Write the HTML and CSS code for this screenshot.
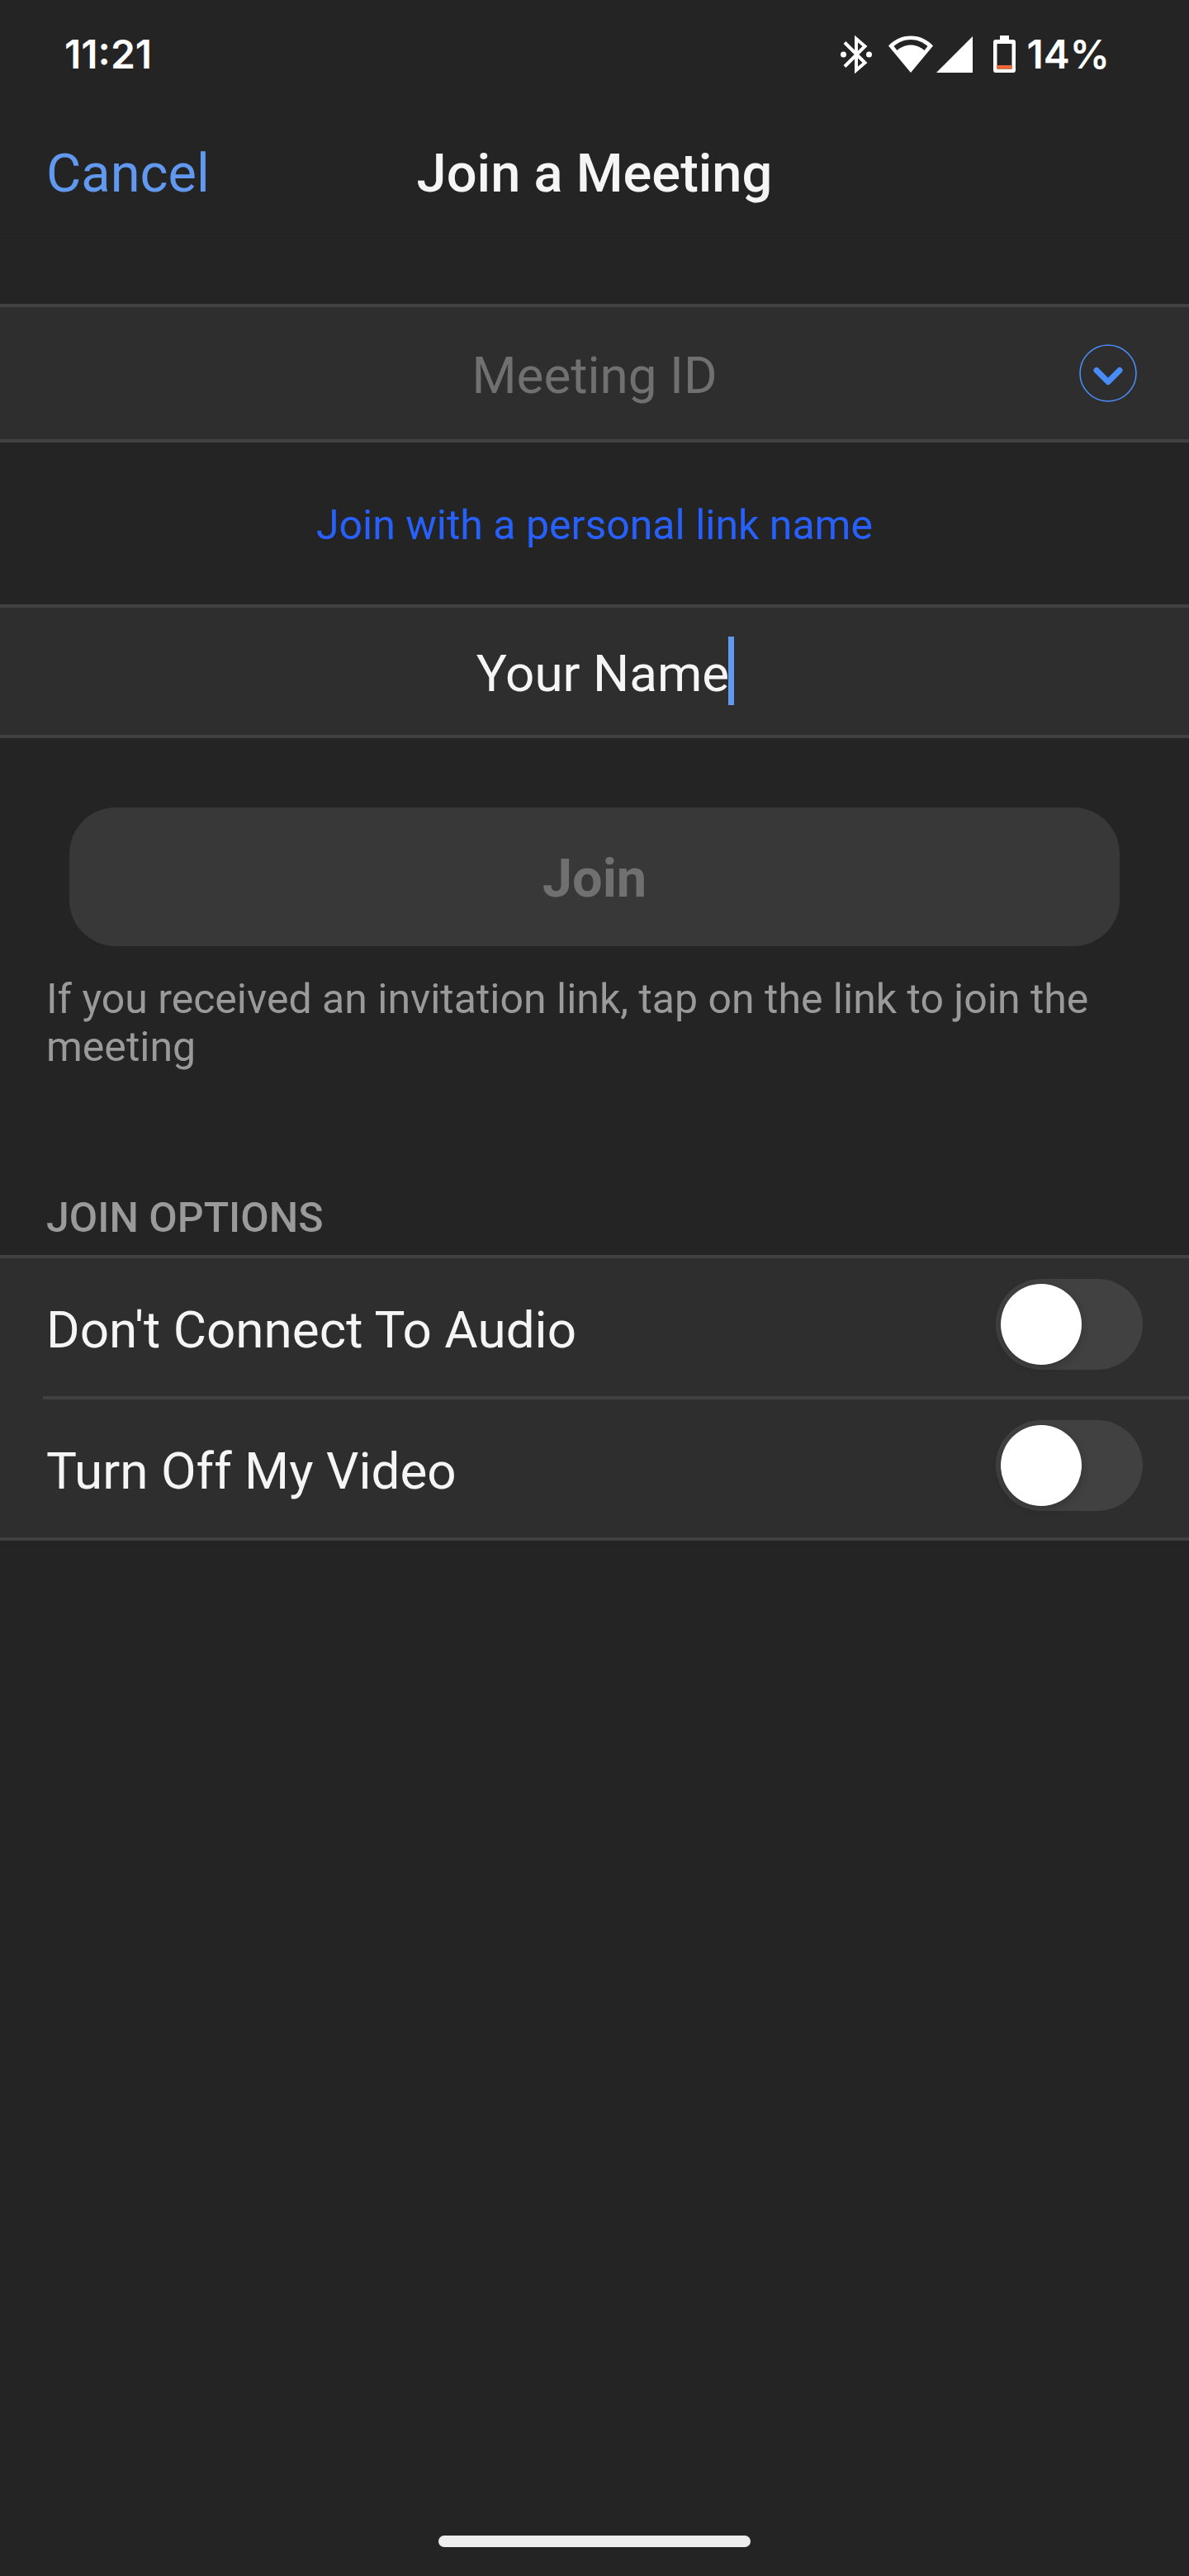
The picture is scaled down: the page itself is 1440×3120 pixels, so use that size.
FILE: index.html
```html
<!DOCTYPE html>
<html lang="en">
<head>
<meta charset="utf-8">
<meta name="viewport" content="width=device-width, initial-scale=1">
<title>Join a Meeting</title>
<link rel="stylesheet" href="styles.css">
</head>
<body>
<div class="screen">
  <div class="status">
    <span class="status-text">11:21</span>
    <div class="status-icons">
      <svg class="icon-bluetooth" width="38" height="46" viewBox="0 0 38 46" aria-hidden="true">
        <path d="M5 8.500 L29.500 33 L19 42 V4 L29.500 13 L5 37.500" fill="none" stroke="#fff" stroke-width="4"/>
        <circle cx="3.500" cy="23" r="3.500" fill="#fff"/>
        <circle cx="34.500" cy="23" r="3.500" fill="#fff"/>
      </svg>
      <svg class="icon-wifi" width="54" height="46" viewBox="0 0 54 46" aria-hidden="true">
        <path fill="#fff" fill-rule="evenodd" d="M27 45 0 12.500C7 5 16 .500 27 .500S47 5 54 12.500ZM6.500 13 10.500 18C15 14 21 11.500 27 11.500S39 14 43.500 18L47.500 13C42 8 35 5 27 5S12 8 6.500 13Z"/>
      </svg>
      <svg class="icon-signal" width="44" height="46" viewBox="0 0 44 46" aria-hidden="true">
        <path fill="#fff" d="M0 45H44V1Z"/>
      </svg>
      <svg class="icon-battery" width="27" height="46" viewBox="0 0 27 46" aria-hidden="true">
        <path fill="#fff" fill-rule="evenodd" d="M8 0H19V5H24Q27 5 27 8V42Q27 45 24 45H3Q0 45 0 42V8Q0 5 3 5H8ZM4.500 10V40.500H22.500V10Z"/>
        <path fill="#f26535" d="M4.500 36H22.500V40.500H4.500Z"/>
      </svg>
      <span class="status-text">14%</span>
    </div>
  </div>

  <header class="header">
    <button class="cancel" type="button">Cancel</button>
    <h1 class="title">Join a Meeting</h1>
  </header>

  <main class="main">
    <form class="form">
      <div class="field field-id">
        <input class="input" type="text" placeholder="Meeting ID" aria-label="Meeting ID">
        <button class="history" type="button" aria-label="Recent meetings">
          <svg width="70" height="70" viewBox="0 0 70 70" aria-hidden="true">
            <circle cx="35" cy="35" r="34" fill="none" stroke="#4a8cf7" stroke-width="1.600"/>
            <path d="M21 31.500 35 45.500 49 31.500" fill="none" stroke="#4a8cf7" stroke-width="7" stroke-linecap="round" stroke-linejoin="round"/>
          </svg>
        </button>
      </div>
      <div class="link-row"><a class="link" href="#">Join with a personal link name</a></div>
      <div class="field field-name">
        <input class="input" type="text" value="Your Name" aria-label="Your Name">
        <span class="caret"></span>
      </div>
      <button class="join" type="submit" disabled>Join</button>
      <p class="hint">If you received an invitation link, tap on the link to join the meeting</p>

      <h2 class="section-title">JOIN OPTIONS</h2>
      <div class="options">
        <div class="option">
          <label class="option-label" for="audio">Don't Connect To Audio</label>
          <input class="switch" type="checkbox" role="switch" id="audio">
        </div>
        <div class="divider"></div>
        <div class="option">
          <label class="option-label" for="video">Turn Off My Video</label>
          <input class="switch" type="checkbox" role="switch" id="video">
        </div>
      </div>
    </form>
  </main>

  <div class="home"></div>
</div>
</body>
</html>
```

FILE: styles.css
```css
* { box-sizing: border-box; }

body {
  margin: 0;
  background: #242424;
  color: #f5f5f5;
  font-family: Roboto, "Liberation Sans", sans-serif;
}

button, input {
  margin: 0;
  border: 0;
  padding: 0;
  background: none;
  color: inherit;
  font: inherit;
}

.screen {
  display: flex;
  flex-direction: column;
  min-height: 100vh;
}

/* Status bar */
.status {
  display: flex;
  justify-content: space-between;
  align-items: center;
  height: 132px;
  padding: 0 96px 0 78px;
}

.status-text {
  font: 600 48px/60px Inter, Roboto, sans-serif;
  color: #fff;
}

.status-icons { display: flex; align-items: center; }
.icon-bluetooth { margin-right: 20px; }
.icon-wifi { margin-right: 4px; }
.icon-signal { margin-right: 25px; }
.icon-battery { margin-right: 14px; }

/* Title bar */
.header {
  display: grid;
  grid-template-columns: 1fr auto 1fr;
  align-items: center;
  height: 152px;
  padding: 4px 56px 0;
  border-bottom: 1px solid #212121;
  font-size: 65px;
  line-height: 80px;
}

.cancel { justify-self: start; color: #6199f0; }

.title {
  margin: 0;
  font-size: inherit;
  font-weight: 500;
}

.main { flex: 1; padding-top: 84px; }

/* Text fields */
.field {
  position: relative;
  display: flex;
  background: #2e2e2e;
  border: solid #414141;
  border-width: 4px 0;
}

.input {
  flex: 1;
  min-width: 0;
  padding: 6px 56px 0;
  font-size: 62px;
  line-height: 72px;
  text-align: center;
  outline: 0;
}

.input::placeholder { color: #707070; opacity: 1; }

.field-id { height: 168px; }
.field-name { height: 162px; }
.field-name .input { padding-left: 76px; }

.history {
  position: absolute;
  top: 45px;
  right: 63px;
  width: 70px;
  height: 70px;
}

.history svg { display: block; }

.caret {
  position: absolute;
  top: 35px;
  left: calc(50% + 162px);
  width: 7px;
  height: 83px;
  background: #6199f0;
}

.link-row {
  padding: 70px 56px 66px;
  font-size: 50px;
  line-height: 60px;
  text-align: center;
}

.link { color: #2760fa; text-decoration: none; }

.join {
  display: block;
  width: calc(100% - 168px);
  height: 168px;
  margin: 84px 84px 0;
  padding-top: 4px;
  border-radius: 56px;
  background: #383838;
  color: #707070;
  font-size: 65px;
  font-weight: 700;
}

.hint {
  margin: 0;
  padding: 35px 56px 0;
  color: #9a9a9a;
  font-size: 50px;
  line-height: 58px;
}

/* Options */
.section-title {
  margin: 0;
  padding: 148px 56px 15px;
  color: #9a9a9a;
  font-size: 50px;
  font-weight: 500;
  line-height: 60px;
}

.options {
  background: #2e2e2e;
  border: solid #414141;
  border-width: 4px 0;
}

.option {
  display: flex;
  justify-content: space-between;
  align-items: center;
  padding: 25px 56px 32px;
}

.option-label {
  padding-top: 14px;
  font-size: 62px;
  line-height: 72px;
}

.divider { height: 4px; margin-left: 52px; background: #414141; }

.switch {
  appearance: none;
  flex: none;
  width: 178px;
  height: 110px;
  padding: 6px;
  border-radius: 55px;
  background: #414141;
}

.switch::before {
  content: "";
  display: block;
  width: 98px;
  height: 98px;
  border-radius: 50%;
  background: #fff;
  box-shadow: 0 4px 12px rgba(0, 0, 0, .2);
}

.switch:checked { background: #2760fa; }
.switch:checked::before { margin-left: auto; }

.home {
  width: 378px;
  height: 14px;
  margin: 0 auto 35px;
  border-radius: 7px;
  background: #ededed;
}
```
